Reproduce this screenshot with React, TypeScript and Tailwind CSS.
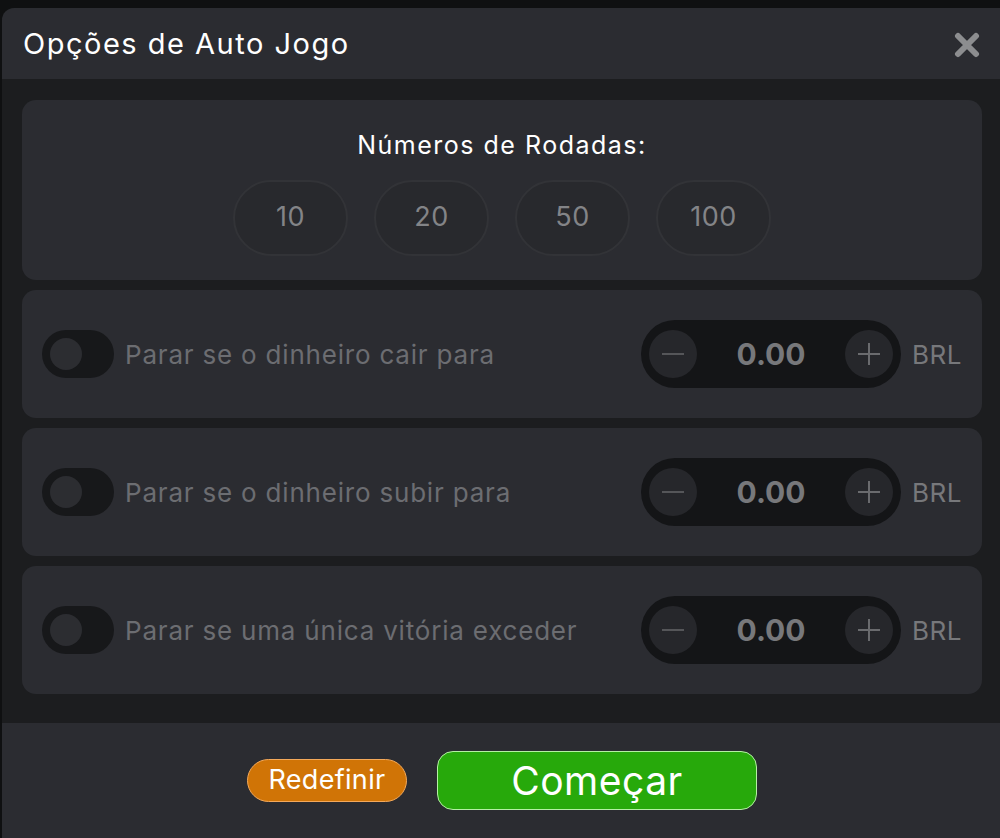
import React from "react";

const rounds = ["10", "20", "50", "100"];
const stops = [
  "Parar se o dinheiro cair para",
  "Parar se o dinheiro subir para",
  "Parar se uma única vitória exceder",
];

const StopRow = ({ label }: { label: string }) => {
  return (
    <div className="flex items-center h-[128px] rounded-[14px] bg-[#2b2c31] pl-5 pr-5">
      <div className="flex items-center w-[72px] h-[48px] rounded-full bg-[#17181a] pl-2">
        <div className="w-[32px] h-[32px] rounded-full bg-[#2c2d31]" />
      </div>
      <span className="ml-[11px] text-[26px] tracking-[0.8px] text-[#6c6d71]">{label}</span>
      <div className="ml-auto flex items-center justify-between w-[260px] h-[68px] rounded-full bg-[#141517] px-2">
        <div className="flex items-center justify-center w-[48px] h-[48px] rounded-full bg-[#26272b]">
          <div className="w-[22px] h-[2px] bg-[#555659]" />
        </div>
        <span className="text-[30px] font-bold text-[#77787b]">0.00</span>
        <div className="flex items-center justify-center w-[48px] h-[48px] rounded-full bg-[#26272b]">
          <svg width="22" height="22" viewBox="0 0 22 22">
            <path d="M11 0v22M0 11h22" stroke="#6a6b6e" strokeWidth="2" />
          </svg>
        </div>
      </div>
      <span className="ml-[11px] text-[26px] tracking-[0.5px] text-[#77787b]">BRL</span>
    </div>
  );
};

const App = () => {
  return (
    <div
      className="w-[1000px] h-[838px] bg-[#0f1011] pt-2 pl-[2px] overflow-hidden"
      style={{ fontFamily: "Inter, 'Noto Sans', sans-serif" }}
    >
      <div className="flex flex-col h-full rounded-tl-[12px] overflow-hidden bg-[#2b2c31]">
        <div className="flex items-center justify-between h-[71px] pl-[21px] pr-[20px] shrink-0">
          <h1 className="text-[29px] tracking-[1.5px] text-white">Opções de Auto Jogo</h1>
          <svg width="26" height="26" viewBox="0 0 26 26" className="mt-[3px]">
            <path d="M4 4L22 22M22 4L4 22" stroke="#8c8d8f" strokeWidth="6" strokeLinecap="round" />
          </svg>
        </div>
        <div className="flex flex-col gap-[10px] bg-[#1c1d1f] pt-[21px] pb-[29px] pl-5 pr-[18px]">
          <div className="flex flex-col items-center h-[180px] rounded-[14px] bg-[#2b2c31] pt-[27px]">
            <p className="text-[25px] tracking-[1.5px] text-white">Números de Rodadas:</p>
            <div className="flex gap-[26px] mt-[15px]">
              {rounds.map((r) => (
                <button
                  key={r}
                  className="w-[115px] h-[76px] rounded-full bg-[#28292d] border-2 border-[#323337] text-[27px] tracking-[0.5px] text-[#838487]"
                >
                  {r}
                </button>
              ))}
            </div>
          </div>
          {stops.map((s) => (
            <StopRow key={s} label={s} />
          ))}
        </div>
        <div className="flex flex-1 items-center justify-center gap-[30px] pl-[2px]">
          <button className="w-[160px] h-[43px] rounded-full bg-[#d07406] border border-[#f4a95a] text-[27px] tracking-[0.3px] text-white">
            Redefinir
          </button>
          <button className="w-[320px] h-[59px] rounded-[16px] bg-[#27a90b] border border-[#b5f0a5] text-[39px] tracking-[0.5px] text-white">
            Começar
          </button>
        </div>
      </div>
    </div>
  );
};

export default App;
